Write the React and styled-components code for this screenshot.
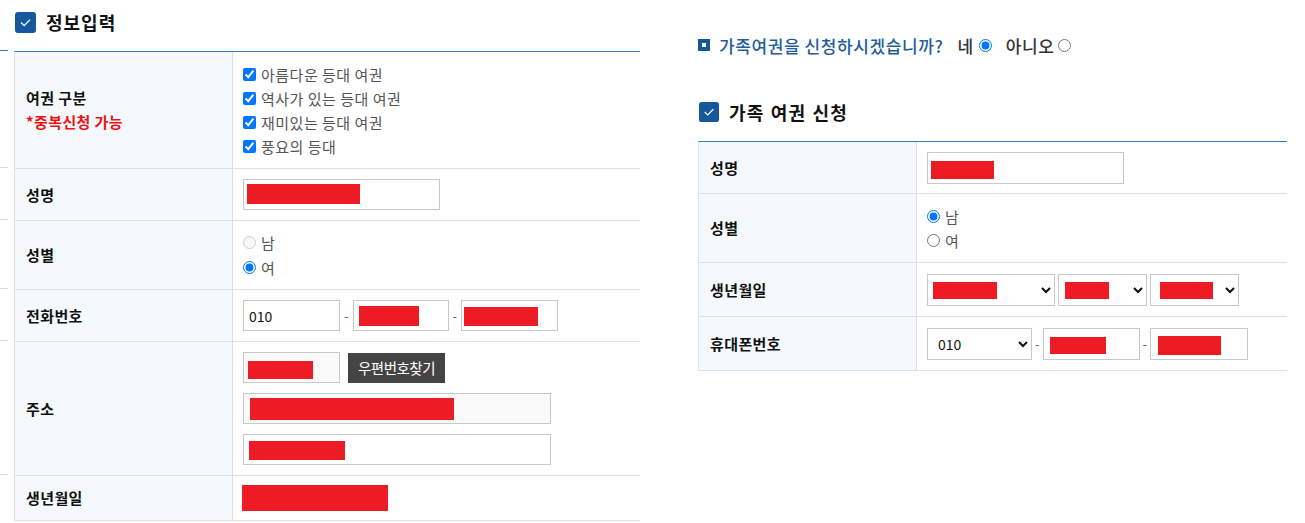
import styled, { createGlobalStyle } from "styled-components";

const GlobalStyle = createGlobalStyle`
  * { box-sizing: border-box; }
  body {
    margin: 0;
    background: #fff;
    font-family: "Noto Sans CJK KR", "Noto Sans", sans-serif;
    color: #222;
  }
`;

const Page = styled.div`
  display: flex;
  width: 1305px;
  height: 523px;
  overflow: hidden;
`;

/* clipped table rows of a previous column at the far left edge */
const Stub = styled.div`
  width: 8px;
  padding-top: 50px;
  display: flex;
  flex-direction: column;
`;

const StubRow = styled.div`
  height: ${(p) => p.$h}px;
  border-top: 1px solid ${(p) => (p.$blue ? "#2f7ec6" : "#d9dde2")};
`;

const Section = styled.section`
  width: ${(p) => p.$w}px;
  margin-left: ${(p) => p.$ml}px;
  padding-top: ${(p) => p.$pt || 0}px;
`;

const Title = styled.h2`
  margin: 0 0 7px;
  height: 44px;
  display: flex;
  align-items: center;
  gap: 10px;
  padding-left: 1px;
  font-size: 18px;
  font-weight: 700;
  color: #111;
  letter-spacing: ${(p) => (p.$small ? 1.2 : 1)}px;
  word-spacing: ${(p) => (p.$small ? 1 : 0)}px;
`;

const Table = styled.div`
  border-top: 1px solid #2f7ec6;
  border-left: 1px solid #dcdfe3;
`;

const Row = styled.div`
  display: grid;
  grid-template-columns: 218px 1fr;
  height: ${(p) => p.$h}px;
  border-bottom: 1px solid #dcdfe3;
`;

const Label = styled.div`
  background: #f5f8fc;
  border-right: 1px solid #dcdfe3;
  padding-left: 11px;
  display: flex;
  flex-direction: column;
  justify-content: center;
  font-size: 15px;
  font-weight: 700;
  line-height: 24px;
  letter-spacing: 0.4px;
  color: #111;
`;

const Note = styled.span`
  color: #f01010;
`;

const Value = styled.div`
  padding-left: 10px;
  display: flex;
  flex-direction: column;
  justify-content: center;
  gap: ${(p) => p.$gap || 0}px;
`;

const Line = styled.div`
  display: flex;
  align-items: center;
  gap: ${(p) => (p.$gap === undefined ? 4 : p.$gap)}px;
`;

const Choice = styled.label`
  display: flex;
  align-items: center;
  gap: 5px;
  height: ${(p) => p.$lh || 24}px;
  font-size: 15px;
  letter-spacing: 0.5px;
  color: #555;

  input {
    margin: 0;
    width: 13px;
    height: 13px;
  }
`;

const Box = styled.div`
  position: relative;
  width: ${(p) => p.$w}px;
  height: ${(p) => p.$h || 31}px;
  border: 1px solid #c8c8c8;
  background: ${(p) => p.$bg || "#fff"};
`;

const TextInput = styled.input`
  width: ${(p) => p.$w}px;
  height: 31px;
  border: 1px solid #c8c8c8;
  padding: 0 5px;
  font-family: inherit;
  font-size: 14px;
  color: #111;
  outline: none;
`;

const Redact = styled.span`
  position: absolute;
  left: ${(p) => p.$x}px;
  top: ${(p) => p.$y}px;
  width: ${(p) => p.$w}px;
  height: ${(p) => p.$h}px;
  background: #ed1c24;
`;

const BareRedact = styled.span`
  display: block;
  width: ${(p) => p.$w}px;
  height: ${(p) => p.$h}px;
  margin-left: -1px;
  background: #ed1c24;
`;

const Dash = styled.span`
  font-size: 13px;
  color: #666;
`;

const ZipButton = styled.button`
  height: 30px;
  padding: 0 10px;
  border: 0;
  margin-left: 3px;
  background: #444;
  color: #fff;
  font-family: inherit;
  font-size: 14.5px;
  letter-spacing: -0.5px;
`;

const SelectWrap = styled.div`
  position: relative;
  width: ${(p) => p.$w}px;
`;

const Select = styled.select`
  width: 100%;
  height: 32px;
  border: 1px solid #c8c8c8;
  border-radius: 0;
  background: #fff;
  padding: 0 6px;
  font-family: inherit;
  font-size: 14px;
  color: #111;
  outline: none;
`;

const Question = styled.div`
  display: flex;
  align-items: center;
  height: 24px;
  font-size: 17px;
  font-weight: 500;
  letter-spacing: 0.6px;
  margin-bottom: 33px;
`;

const QuestionText = styled.span`
  color: #1f5d99;
  margin: 0 14px 0 9px;
`;

const Answer = styled.label`
  display: flex;
  align-items: center;
  gap: ${(p) => p.$gap}px;
  margin-right: 14px;
  color: #333;

  input {
    margin: 0;
    width: 13px;
    height: 13px;
  }
`;

const CheckIcon = ({ size = 21 }) => (
  <svg width={size} height={size} viewBox="0 0 21 21">
    <rect x="0" y="0" width="21" height="21" rx="3" fill="#16589c" />
    <path d="M6 10.5 L9.2 13.6 L15 7.6" fill="none" stroke="#fff" strokeWidth="1.3" />
  </svg>
);

const SquareBullet = () => (
  <svg width="12" height="12" viewBox="0 0 12 12">
    <rect width="12" height="12" fill="#16589c" />
    <rect x="4" y="4" width="4" height="4" fill="#fff" />
  </svg>
);

const passports = ["아름다운 등대 여권", "역사가 있는 등대 여권", "재미있는 등대 여권", "풍요의 등대"];

const InfoSection = () => (
  <Section $w={626} $ml={6}>
    <Title>
      <CheckIcon />
      정보입력
    </Title>
    <Table>
      <Row $h={117}>
        <Label>
          여권 구분
          <Note>*중복신청 가능</Note>
        </Label>
        <Value>
          {passports.map((p) => (
            <Choice key={p}>
              <input type="checkbox" defaultChecked />
              {p}
            </Choice>
          ))}
        </Value>
      </Row>
      <Row $h={52}>
        <Label>성명</Label>
        <Value>
          <Box $w={197}>
            <Redact $x={3} $y={4} $w={113} $h={20} />
          </Box>
        </Value>
      </Row>
      <Row $h={69}>
        <Label>성별</Label>
        <Value>
          <Choice $lh={25}>
            <input type="radio" name="sex" disabled />
            남
          </Choice>
          <Choice $lh={25}>
            <input type="radio" name="sex" defaultChecked />
            여
          </Choice>
        </Value>
      </Row>
      <Row $h={52}>
        <Label>전화번호</Label>
        <Value>
          <Line>
            <TextInput $w={97} defaultValue="010" readOnly />
            <Dash>-</Dash>
            <Box $w={96}>
              <Redact $x={5} $y={5} $w={60} $h={20} />
            </Box>
            <Dash>-</Dash>
            <Box $w={97}>
              <Redact $x={2} $y={6} $w={74} $h={19} />
            </Box>
          </Line>
        </Value>
      </Row>
      <Row $h={134}>
        <Label>주소</Label>
        <Value $gap={10}>
          <Line $gap={5}>
            <Box $w={97} $bg="#f9f9f9">
              <Redact $x={4} $y={8} $w={65} $h={18} />
            </Box>
            <ZipButton type="button">우편번호찾기</ZipButton>
          </Line>
          <Box $w={308} $bg="#f9f9f9">
            <Redact $x={6} $y={4} $w={204} $h={22} />
          </Box>
          <Box $w={308}>
            <Redact $x={5} $y={6} $w={96} $h={19} />
          </Box>
        </Value>
      </Row>
      <Row $h={45}>
        <Label>생년월일</Label>
        <Value>
          <BareRedact $w={146} $h={26} />
        </Value>
      </Row>
    </Table>
  </Section>
);

const FamilySection = () => (
  <Section $w={589} $ml={58} $pt={33}>
    <Question>
      <SquareBullet />
      <QuestionText>가족여권을 신청하시겠습니까?</QuestionText>
      <Answer $gap={5}>
        네
        <input type="radio" name="family" defaultChecked />
      </Answer>
      <Answer $gap={3}>
        아니오
        <input type="radio" name="family" />
      </Answer>
    </Question>
    <Title $small>
      <CheckIcon size={20} />
      가족 여권 신청
    </Title>
    <Table>
      <Row $h={52}>
        <Label>성명</Label>
        <Value>
          <Box $w={197} $h={32}>
            <Redact $x={3} $y={8} $w={63} $h={18} />
          </Box>
        </Value>
      </Row>
      <Row $h={69}>
        <Label>성별</Label>
        <Value>
          <Choice>
            <input type="radio" name="fsex" defaultChecked />
            남
          </Choice>
          <Choice>
            <input type="radio" name="fsex" />
            여
          </Choice>
        </Value>
      </Row>
      <Row $h={54}>
        <Label>생년월일</Label>
        <Value>
          <Line $gap={3}>
            <SelectWrap $w={128}>
              <Select>
                <option> </option>
              </Select>
              <Redact $x={6} $y={8} $w={64} $h={17} />
            </SelectWrap>
            <SelectWrap $w={89}>
              <Select>
                <option> </option>
              </Select>
              <Redact $x={7} $y={8} $w={44} $h={17} />
            </SelectWrap>
            <SelectWrap $w={89}>
              <Select>
                <option> </option>
              </Select>
              <Redact $x={10} $y={8} $w={53} $h={17} />
            </SelectWrap>
          </Line>
        </Value>
      </Row>
      <Row $h={54}>
        <Label>휴대폰번호</Label>
        <Value>
          <Line $gap={3}>
            <SelectWrap $w={105}>
              <Select defaultValue="010">
                <option value="010">010</option>
              </Select>
            </SelectWrap>
            <Dash>-</Dash>
            <Box $w={97} $h={32}>
              <Redact $x={6} $y={8} $w={56} $h={17} />
            </Box>
            <Dash>-</Dash>
            <Box $w={98} $h={32}>
              <Redact $x={7} $y={7} $w={63} $h={19} />
            </Box>
          </Line>
        </Value>
      </Row>
    </Table>
  </Section>
);

const App = () => (
  <Page>
    <GlobalStyle />
    <Stub>
      <StubRow $blue $h={117} />
      <StubRow $h={52} />
      <StubRow $h={69} />
      <StubRow $h={52} />
      <StubRow $h={134} />
      <StubRow $h={45} />
    </Stub>
    <InfoSection />
    <FamilySection />
  </Page>
);

export default App;
